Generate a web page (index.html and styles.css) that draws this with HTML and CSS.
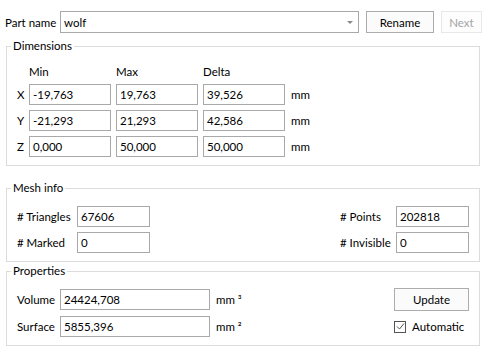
FILE: index.html
```html
<!DOCTYPE html>
<html lang="en">
<head>
    <meta charset="UTF-8">
    <title>Mesh properties</title>
    <link rel="stylesheet" href="styles.css">
</head>
<body>
    <div class="part-row">
        <span class="part-label">Part name</span>
        <div class="combo">
            <span>wolf</span>
            <span class="combo-arrow"></span>
        </div>
        <button class="btn btn-rename">Rename</button>
        <button class="btn btn-next" disabled>Next</button>
    </div>

    <fieldset class="group group-dims">
        <legend>Dimensions</legend>
        <div class="dims-grid">
            <span></span>
            <span class="col-head">Min</span>
            <span class="col-head">Max</span>
            <span class="col-head">Delta</span>
            <span></span>

            <span class="axis">X</span>
            <input class="field" value="-19,763">
            <input class="field" value="19,763">
            <input class="field" value="39,526">
            <span class="unit">mm</span>

            <span class="axis">Y</span>
            <input class="field" value="-21,293">
            <input class="field" value="21,293">
            <input class="field" value="42,586">
            <span class="unit">mm</span>

            <span class="axis">Z</span>
            <input class="field" value="0,000">
            <input class="field" value="50,000">
            <input class="field" value="50,000">
            <span class="unit">mm</span>
        </div>
    </fieldset>

    <fieldset class="group group-mesh">
        <legend>Mesh info</legend>
        <div class="mesh-grid">
            <span class="label"># Triangles</span>
            <input class="field" value="67606">
            <span></span>
            <span class="label"># Points</span>
            <input class="field" value="202818">

            <span class="label"># Marked</span>
            <input class="field" value="0">
            <span></span>
            <span class="label"># Invisible</span>
            <input class="field" value="0">
        </div>
    </fieldset>

    <fieldset class="group group-props">
        <legend>Properties</legend>
        <div class="props-grid">
            <span class="label">Volume</span>
            <input class="field" value="24424,708">
            <span class="unit">mm ³</span>
            <span></span>
            <button class="btn btn-update">Update</button>

            <span class="label">Surface</span>
            <input class="field" value="5855,396">
            <span class="unit">mm ²</span>
            <span></span>
            <label class="check">
                <span class="check-box">
                    <svg width="9" height="9" viewBox="0 0 9 9"><path d="M1 4.5 L3.5 7 L8 1.5" fill="none" stroke="#555" stroke-width="1"/></svg>
                </span>
                Automatic
            </label>
        </div>
    </fieldset>
</body>
</html>
```

FILE: styles.css
```css
* {
    box-sizing: border-box;
}
body {
    margin: 0;
    padding: 11px 0 0 5px;
    background-color: #ffffff;
    font-family: Lato, "Liberation Sans", sans-serif;
    font-size: 11.5px;
    color: #000;
}
.part-row {
    display: flex;
    align-items: center;
    height: 22px;
}
.part-label {
    width: 55px;
}
.combo {
    width: 299px;
    height: 22px;
    border: 1px solid #a9a9a9;
    display: flex;
    align-items: center;
    justify-content: space-between;
    padding: 0 5px 0 3px;
}
.combo-arrow {
    width: 0;
    height: 0;
    border-left: 3px solid transparent;
    border-right: 3px solid transparent;
    border-top: 3px solid #8a8a8a;
}
.btn {
    font-family: inherit;
    font-size: inherit;
    color: #000;
    background-color: #fbfbfb;
    border: 1px solid #adadad;
    padding: 0;
    height: 22px;
}
.btn-rename {
    width: 68px;
    margin-left: 7px;
}
.btn-next {
    width: 41px;
    margin-left: 7px;
    border-color: #e8e8e8;
    background-color: #fdfdfd;
    color: #a3a3a3;
}
.group {
    margin: 0 0 0 1px;
    width: 474px;
    border: 1px solid #dcdcdc;
    padding: 10px 10px 8px 10px;
    min-width: 0;
}
.group legend {
    margin-left: -6px;
    padding: 0 2px;
    line-height: 16px;
}
.group-dims {
    margin-top: 5px;
}
.group-mesh {
    margin-top: 14px;
}
.group-props {
    margin-top: 1px;
}
.field {
    font-family: inherit;
    font-size: inherit;
    color: #000;
    height: 21px;
    border: 1px solid #a9a9a9;
    padding: 0 3px;
    margin: 0;
    outline: none;
    background: #fff;
    width: 100%;
}
.dims-grid {
    display: grid;
    grid-template-columns: 7px 82px 82px 82px auto;
    column-gap: 5px;
    row-gap: 5px;
    align-items: center;
}
.col-head {
    line-height: 15px;
}
.unit {
    padding-left: 1px;
}
.mesh-grid {
    display: grid;
    grid-template-columns: 55px 73px 1fr 51px 73px;
    grid-auto-rows: 21px;
    column-gap: 5px;
    row-gap: 5px;
    align-items: center;
}
.props-grid {
    display: grid;
    grid-template-columns: 38px 150px auto 1fr 75px;
    grid-auto-rows: 21px;
    column-gap: 5px;
    row-gap: 6px;
    align-items: center;
}
.btn-update {
    height: 23px;
    margin: -1px 0;
}
.check {
    display: flex;
    align-items: center;
    gap: 6px;
}
.check-box {
    width: 12px;
    height: 12px;
    border: 1px solid #555;
    display: flex;
    align-items: center;
    justify-content: center;
}
```
